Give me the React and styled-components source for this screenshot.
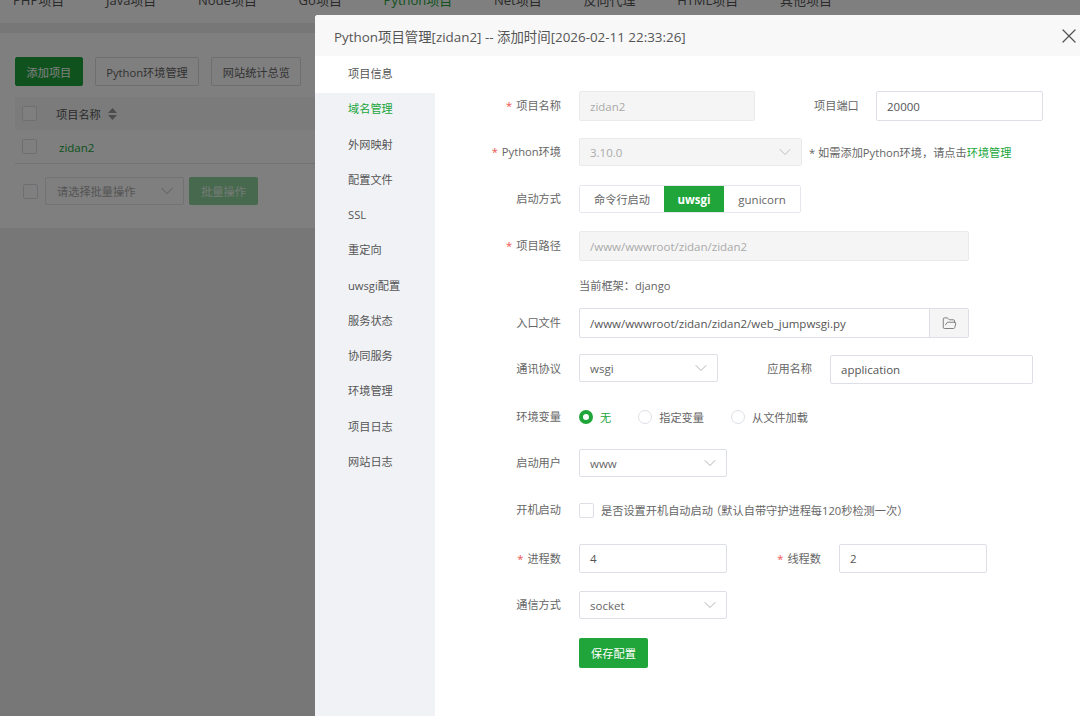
import React from 'react';
import styled, { createGlobalStyle } from 'styled-components';
import { ChevronDown, FolderOpen, X } from 'lucide-react';

const GlobalStyle = createGlobalStyle`
  html, body {
    margin: 0;
    height: 100%;
    overflow: hidden;
  }
  * {
    box-sizing: border-box;
  }
  body {
    font-family: "Open Sans", "Noto Sans CJK SC", sans-serif;
    font-size: 11.2px;
    color: #666;
  }
`;

const Page = styled.div`
  position: relative;
  width: 1080px;
  height: 716px;
  overflow: hidden;
  background: #eeeeee;
`;

const TopNav = styled.nav`
  display: flex;
  gap: 41.7px;
  height: 23px;
  padding-left: 13px;
  background: #fff;
  overflow: hidden;
`;

const NavItem = styled.span`
  margin-top: -9px;
  font-size: 13px;
  line-height: 18px;
  white-space: nowrap;
  color: ${(p) => (p.$active ? '#20a53a' : '#555')};
`;

const Panel = styled.section`
  height: 195px;
  margin-top: 10px;
  padding: 24px 15px 0;
  background: #fff;
`;

const Toolbar = styled.div`
  display: flex;
  gap: 12px;
`;

const Button = styled.div`
  display: flex;
  align-items: center;
  justify-content: center;
  height: 29px;
  padding: 0 10.5px;
  border: 1px solid ${(p) => (p.$primary ? '#20a53a' : '#ddd')};
  border-radius: 2px;
  background: ${(p) => (p.$primary ? '#20a53a' : '#fff')};
  color: ${(p) => (p.$primary ? '#fff' : '#666')};
  white-space: nowrap;
`;

const TableHead = styled.div`
  display: flex;
  align-items: center;
  height: 33px;
  margin-top: 11px;
  padding-left: 7px;
  background: #f6f6f6;
`;

const TableRow = styled.div`
  display: flex;
  align-items: center;
  height: 34px;
  padding-left: 7px;
  border-bottom: 1px solid #e4e7ed;
`;

const CheckBox = styled.span`
  display: block;
  flex: none;
  width: 15px;
  height: 15px;
  border: 1px solid #dcdfe6;
  border-radius: 2px;
  background: #fff;
`;

const HeadText = styled.span`
  margin-left: 19px;
  color: #555;
`;

const SortIcon = styled.svg`
  width: 9px;
  height: 12px;
  margin-left: 7px;
  fill: #999;
`;

const ProjectLink = styled.span`
  margin-left: 22px;
  padding-top: 2px;
  font-size: 11.5px;
  color: #20a53a;
`;

const BulkRow = styled.div`
  display: flex;
  align-items: center;
  height: 28px;
  margin-top: 13px;
  padding-left: 8px;
`;

const BulkSelect = styled.div`
  display: flex;
  align-items: center;
  justify-content: space-between;
  width: 139px;
  height: 28px;
  margin-left: 7px;
  padding: 0 6px 0 11px;
  border: 1px solid #e4e4e4;
  border-radius: 2px;
  color: #aaa;
`;

const BulkButton = styled.div`
  display: flex;
  align-items: center;
  justify-content: center;
  width: 69px;
  height: 28px;
  margin-left: 5px;
  border-radius: 2px;
  background: #8fd29c;
  color: #e8f6ea;
`;

const Overlay = styled.div`
  position: absolute;
  inset: 0;
  background: rgba(0, 0, 0, 0.5);
`;

const Modal = styled.div`
  position: absolute;
  top: 15px;
  left: 315px;
  display: flex;
  flex-direction: column;
  width: 765px;
  height: 701px;
  border-radius: 3px 0 0 0;
  background: #fff;
  overflow: hidden;
`;

const ModalHeader = styled.header`
  display: flex;
  flex: none;
  align-items: center;
  justify-content: space-between;
  height: 41px;
  padding-left: 19px;
  background: #f8f8f8;
  font-size: 13.4px;
  color: #555;
`;

const CloseIcon = styled(X)`
  flex: none;
  margin-right: -1px;
  color: #555;
`;

const ModalBody = styled.div`
  display: flex;
  flex: 1;
`;

const SideMenu = styled.aside`
  flex: none;
  width: 120px;
  background: #f0f2f6;
`;

const SideItem = styled.div`
  display: flex;
  align-items: center;
  height: 35.25px;
  padding: 0 0 1px 33px;
  background: ${(p) => (p.$current ? '#fff' : 'transparent')};
  box-shadow: ${(p) => (p.$current ? '0 2px 0 #fff' : 'none')};
  color: ${(p) => (p.$hover ? '#20a53a' : '#555')};
`;

const Form = styled.div`
  flex: 1;
  padding-top: 35px;
`;

const Row = styled.div`
  display: flex;
  align-items: ${(p) => p.$align || 'center'};
  height: ${(p) => p.$h}px;
  margin-top: ${(p) => p.$mt || 0}px;
`;

const Label = styled.label`
  flex: none;
  width: ${(p) => p.$w || 126}px;
  margin-right: ${(p) => p.$mr || 18}px;
  margin-left: ${(p) => p.$ml || 0}px;
  padding-bottom: 2px;
  line-height: ${(p) => (p.$lh ? `${p.$lh}px` : 'normal')};
  text-align: right;
  white-space: nowrap;
  color: #666;
`;

const Star = styled.span`
  margin-right: 4px;
  color: #ef5350;
`;

const TextInput = styled.div`
  display: flex;
  align-items: center;
  flex: none;
  width: ${(p) => p.$w}px;
  height: ${(p) => p.$h || 30}px;
  margin-top: ${(p) => p.$mt || 0}px;
  padding: 0 10px;
  border: 1px solid ${(p) => (p.$disabled ? '#eaeaea' : '#dcdfe6')};
  border-radius: 2px;
  background: ${(p) => (p.$disabled ? '#f5f5f5' : '#fff')};
  font-size: 11.5px;
  color: ${(p) => (p.$disabled ? '#aaa' : '#555')};
  white-space: nowrap;
`;

const SelectBox = styled(TextInput)`
  justify-content: space-between;
  height: 28px;
  padding: 0 6px 0 10px;
  color: ${(p) => (p.$disabled ? '#aaa' : '#666')};
`;

const Note = styled.span`
  margin-left: 7px;
  white-space: nowrap;
  color: #666;
`;

const Link = styled.span`
  color: #20a53a;
`;

const Segments = styled.div`
  display: flex;
  height: 28px;
  border: 1px solid #e4e7ed;
  border-radius: 2px;
`;

const Segment = styled.div`
  display: flex;
  align-items: center;
  justify-content: center;
  width: ${(p) => p.$w}px;
  background: ${(p) => (p.$on ? '#20a53a' : '#fff')};
  color: ${(p) => (p.$on ? '#fff' : '#666')};
  font-size: ${(p) => (p.$latin ? 11.5 : 11.2)}px;
  font-weight: ${(p) => (p.$on ? 700 : 400)};
`;

const Hint = styled.span`
  margin-left: 144px;
  color: #666;
`;

const FileGroup = styled.div`
  display: flex;
  width: 390px;
  height: 30px;
  border: 1px solid #dcdfe6;
  border-radius: 2px;
`;

const FilePath = styled.div`
  display: flex;
  flex: 1;
  align-items: center;
  padding-left: 10px;
  font-size: 11.5px;
  color: #555;
  white-space: nowrap;
`;

const FileButton = styled.div`
  display: flex;
  align-items: center;
  justify-content: center;
  width: 39px;
  border-left: 1px solid #dcdfe6;
  background: #f5f5f5;
  color: #666;
`;

const RadioGroup = styled.div`
  display: flex;
  align-items: center;
`;

const Radio = styled.span`
  display: block;
  flex: none;
  width: 14px;
  height: 14px;
  border-radius: 50%;
  border: ${(p) => (p.$on ? '4px solid #20a53a' : '1px solid #dcdfe6')};
  background: #fff;
`;

const RadioText = styled.span`
  margin-left: 7px;
  margin-right: ${(p) => p.$mr}px;
  color: ${(p) => (p.$on ? '#20a53a' : '#666')};
`;

const CheckText = styled.span`
  margin-left: 7px;
  font-feature-settings: "halt";
  white-space: nowrap;
  color: #666;
`;

const SaveButton = styled.div`
  display: flex;
  align-items: center;
  justify-content: center;
  width: 69px;
  height: 30px;
  margin-left: 144px;
  border-radius: 2px;
  background: #20a53a;
  color: #fff;
`;

const navItems = ['PHP项目', 'Java项目', 'Node项目', 'Go项目', 'Python项目', 'Net项目', '反向代理', 'HTML项目', '其他项目'];
const sideItems = ['项目信息', '域名管理', '外网映射', '配置文件', 'SSL', '重定向', 'uwsgi配置', '服务状态', '协同服务', '环境管理', '项目日志', '网站日志'];

const Chevron = ({ color = '#999' }) => <ChevronDown size={20} color={color} strokeWidth={0.9} />;

const App = () => (
  <Page>
    <GlobalStyle />
    <TopNav>
      {navItems.map((item) => (
        <NavItem key={item} $active={item === 'Python项目'}>{item}</NavItem>
      ))}
    </TopNav>
    <Panel>
      <Toolbar>
        <Button $primary>添加项目</Button>
        <Button>Python环境管理</Button>
        <Button>网站统计总览</Button>
      </Toolbar>
      <TableHead>
        <CheckBox />
        <HeadText>项目名称</HeadText>
        <SortIcon viewBox="0 0 9 12">
          <path d="M4.5 0 9 5H0zM0 7h9l-4.5 5z" />
        </SortIcon>
      </TableHead>
      <TableRow>
        <CheckBox />
        <ProjectLink>zidan2</ProjectLink>
      </TableRow>
      <BulkRow>
        <CheckBox />
        <BulkSelect>
          请选择批量操作
          <Chevron />
        </BulkSelect>
        <BulkButton>批量操作</BulkButton>
      </BulkRow>
    </Panel>
    <Overlay />
    <Modal>
      <ModalHeader>
        <span>Python项目管理[zidan2] -- 添加时间[2026-02-11 22:33:26]</span>
        <CloseIcon size={24} strokeWidth={1.3} />
      </ModalHeader>
      <ModalBody>
        <SideMenu>
          {sideItems.map((item, i) => (
            <SideItem key={item} $current={i === 0} $hover={i === 1}>{item}</SideItem>
          ))}
        </SideMenu>
        <Form>
          <Row $h={30}>
            <Label><Star>*</Star>项目名称</Label>
            <TextInput $w={176} $disabled>zidan2</TextInput>
            <Label $w={43} $mr={19} $ml={59}>项目端口</Label>
            <TextInput $w={167}>20000</TextInput>
          </Row>
          <Row $h={28} $mt={17}>
            <Label><Star>*</Star>Python环境</Label>
            <SelectBox $w={223} $disabled>
              3.10.0
              <Chevron color="#aaa" />
            </SelectBox>
            <Note>* 如需添加Python环境，请点击<Link>环境管理</Link></Note>
          </Row>
          <Row $h={28} $mt={19}>
            <Label>启动方式</Label>
            <Segments>
              <Segment $w={84}>命令行启动</Segment>
              <Segment $w={60} $on $latin>uwsgi</Segment>
              <Segment $w={76} $latin>gunicorn</Segment>
            </Segments>
          </Row>
          <Row $h={30} $mt={18}>
            <Label><Star>*</Star>项目路径</Label>
            <TextInput $w={390} $disabled>/www/wwwroot/zidan/zidan2</TextInput>
          </Row>
          <Row $h={14} $mt={17}>
            <Hint>当前框架：django</Hint>
          </Row>
          <Row $h={30} $mt={16}>
            <Label>入口文件</Label>
            <FileGroup>
              <FilePath>/www/wwwroot/zidan/zidan2/web_jumpwsgi.py</FilePath>
              <FileButton><FolderOpen size={15} strokeWidth={1.3} /></FileButton>
            </FileGroup>
          </Row>
          <Row $h={31} $mt={16} $align="flex-start">
            <Label $lh={30}>通讯协议</Label>
            <SelectBox $w={139}>
              wsgi
              <Chevron />
            </SelectBox>
            <Label $w={50} $ml={44} $lh={30}>应用名称</Label>
            <TextInput $w={203} $h={29} $mt={1}>application</TextInput>
          </Row>
          <Row $h={20} $mt={22}>
            <Label>环境变量</Label>
            <RadioGroup>
              <Radio $on />
              <RadioText $on $mr={27}>无</RadioText>
              <Radio />
              <RadioText $mr={27}>指定变量</RadioText>
              <Radio />
              <RadioText>从文件加载</RadioText>
            </RadioGroup>
          </Row>
          <Row $h={28} $mt={22}>
            <Label>启动用户</Label>
            <SelectBox $w={148}>
              www
              <Chevron />
            </SelectBox>
          </Row>
          <Row $h={20} $mt={23}>
            <Label>开机启动</Label>
            <CheckBox />
            <CheckText>是否设置开机自动启动 （默认自带守护进程每120秒检测一次）</CheckText>
          </Row>
          <Row $h={29} $mt={24}>
            <Label><Star>*</Star>进程数</Label>
            <TextInput $w={148} $h={29}>4</TextInput>
            <Label $w={45} $mr={18} $ml={49}><Star>*</Star>线程数</Label>
            <TextInput $w={148} $h={29}>2</TextInput>
          </Row>
          <Row $h={28} $mt={18}>
            <Label>通信方式</Label>
            <SelectBox $w={148}>
              socket
              <Chevron />
            </SelectBox>
          </Row>
          <Row $h={30} $mt={19}>
            <SaveButton>保存配置</SaveButton>
          </Row>
        </Form>
      </ModalBody>
    </Modal>
  </Page>
);

export default App;
